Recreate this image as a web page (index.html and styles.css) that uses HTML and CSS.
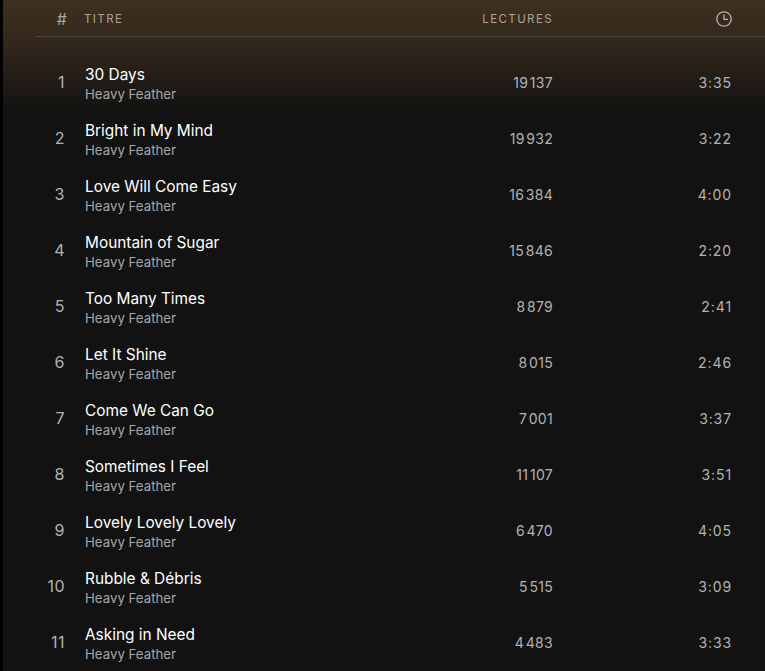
FILE: index.html
```html
<!DOCTYPE html>
<html lang="fr">
<head>
    <meta charset="UTF-8">
    <title>Heavy Feather</title>
    <link rel="stylesheet" href="styles.css">
</head>
<body>
    <div class="edge"></div>
    <main class="tracklist">
        <div class="track-head">
            <span class="num">#</span>
            <span class="head-title">TITRE</span>
            <span class="plays">LECTURES</span>
            <span class="time">
                <svg class="clock" viewBox="0 0 16 16" width="16" height="16">
                    <circle cx="8" cy="8" r="7.2" fill="none" stroke="currentColor" stroke-width="1.3"/>
                    <path d="M8 3.5V8.4H12" fill="none" stroke="currentColor" stroke-width="1.3"/>
                </svg>
            </span>
        </div>
        <div class="rows">
            <div class="track"><span class="num">1</span><div class="info"><div class="name">30 Days</div><div class="artist">Heavy Feather</div></div><span class="plays">19&#8202;137</span><span class="time">3:35</span></div>
            <div class="track"><span class="num">2</span><div class="info"><div class="name">Bright in My Mind</div><div class="artist">Heavy Feather</div></div><span class="plays">19&#8202;932</span><span class="time">3:22</span></div>
            <div class="track"><span class="num">3</span><div class="info"><div class="name">Love Will Come Easy</div><div class="artist">Heavy Feather</div></div><span class="plays">16&#8202;384</span><span class="time">4:00</span></div>
            <div class="track"><span class="num">4</span><div class="info"><div class="name">Mountain of Sugar</div><div class="artist">Heavy Feather</div></div><span class="plays">15&#8202;846</span><span class="time">2:20</span></div>
            <div class="track"><span class="num">5</span><div class="info"><div class="name">Too Many Times</div><div class="artist">Heavy Feather</div></div><span class="plays">8&#8202;879</span><span class="time">2:41</span></div>
            <div class="track"><span class="num">6</span><div class="info"><div class="name">Let It Shine</div><div class="artist">Heavy Feather</div></div><span class="plays">8&#8202;015</span><span class="time">2:46</span></div>
            <div class="track"><span class="num">7</span><div class="info"><div class="name">Come We Can Go</div><div class="artist">Heavy Feather</div></div><span class="plays">7&#8202;001</span><span class="time">3:37</span></div>
            <div class="track"><span class="num">8</span><div class="info"><div class="name">Sometimes I Feel</div><div class="artist">Heavy Feather</div></div><span class="plays">11&#8202;107</span><span class="time">3:51</span></div>
            <div class="track"><span class="num">9</span><div class="info"><div class="name">Lovely Lovely Lovely</div><div class="artist">Heavy Feather</div></div><span class="plays">6&#8202;470</span><span class="time">4:05</span></div>
            <div class="track"><span class="num">10</span><div class="info"><div class="name">Rubble &amp; Débris</div><div class="artist">Heavy Feather</div></div><span class="plays">5&#8202;515</span><span class="time">3:09</span></div>
            <div class="track"><span class="num">11</span><div class="info"><div class="name">Asking in Need</div><div class="artist">Heavy Feather</div></div><span class="plays">4&#8202;483</span><span class="time">3:33</span></div>
        </div>
    </main>
</body>
</html>
```
FILE: styles.css
```css
html, body {
    height: 100%;
}
body {
    margin: 0;
    display: flex;
    overflow: hidden;
    background: #121212;
    font-family: Inter, "Noto Sans", sans-serif;
    color: #b3b3b3;
}
.edge {
    width: 3px;
    flex: none;
    background: #000;
}
.tracklist {
    flex: 1;
    min-width: 0;
    background: linear-gradient(#3e2f20 0, #33281c 40px, #121212 114px);
}
.track-head,
.track {
    display: grid;
    grid-template-columns: 62px 1fr 120px 179px;
    align-items: center;
    padding-right: 33px;
}
.track-head {
    box-sizing: border-box;
    height: 37px;
    padding-top: 2px;
    margin-left: 33px;
    grid-template-columns: 31px 1fr 120px 179px;
    border-bottom: 1px solid rgba(255, 255, 255, 0.14);
    font-size: 11.5px;
    letter-spacing: 1.4px;
    color: #a8a49e;
}
.track-head .num {
    font-size: 16px;
    letter-spacing: 0;
}
.track-head .plays {
    font-size: 11.5px;
    letter-spacing: 1.4px;
}
.head-title {
    padding-left: 17px;
}
.rows {
    padding-top: 17px;
}
.track {
    height: 56px;
}
.num {
    text-align: right;
    font-size: 16px;
    letter-spacing: 0.5px;
}
.info {
    padding: 5px 0 1px 20px;
}
.name {
    font-size: 15.4px;
    line-height: 20px;
    color: #fff;
}
.artist {
    font-size: 13.25px;
    line-height: 18px;
    color: #a7a7a7;
}
.plays,
.time {
    text-align: right;
    font-size: 14px;
}
.plays {
    letter-spacing: 0.3px;
}
.time {
    letter-spacing: 0.9px;
}
.clock {
    display: block;
    margin-left: auto;
    color: #b3b3b3;
}
```
